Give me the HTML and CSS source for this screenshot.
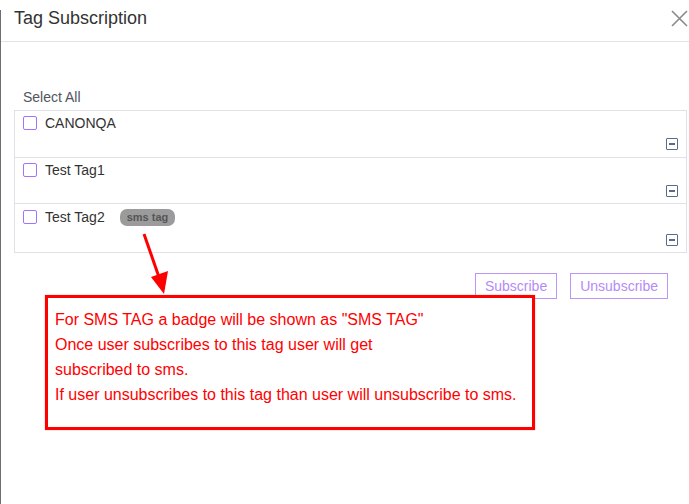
FILE: index.html
```html
<!DOCTYPE html>
<html>
<head>
<meta charset="utf-8">
<link rel="stylesheet" href="styles.css">
</head>
<body>
<div class="page">
  <div class="edge"></div>
  <div class="modal">
    <div class="modal-header">
      <h1 class="modal-title">Tag Subscription</h1>
      <button class="close" aria-label="Close">
        <svg width="17" height="17" viewBox="0 0 17 17"><path d="M1 1L16 16M16 1L1 16" stroke="#8a8a8a" stroke-width="1.6" fill="none"/></svg>
      </button>
    </div>
    <div class="modal-body">
      <div class="select-all">Select All</div>
      <ul class="tag-list">
        <li class="tag-row first">
          <div class="tag-top"><span class="check"></span><span class="tag-name">CANONQA</span></div>
          <div class="tag-bottom"><span class="collapse"></span></div>
        </li>
        <li class="tag-row">
          <div class="tag-top"><span class="check"></span><span class="tag-name">Test Tag1</span></div>
          <div class="tag-bottom"><span class="collapse"></span></div>
        </li>
        <li class="tag-row">
          <div class="tag-top tall"><span class="check"></span><span class="tag-name">Test Tag2</span><span class="badge">sms tag</span></div>
          <div class="tag-bottom"><span class="collapse"></span></div>
        </li>
      </ul>
      <div class="actions">
        <button class="btn">Subscribe</button>
        <button class="btn">Unsubscribe</button>
      </div>
    </div>
  </div>
  <svg class="arrow" width="40" height="70" viewBox="0 0 40 70">
    <line x1="4" y1="4" x2="20" y2="50" stroke="#ff0000" stroke-width="3"/>
    <polygon points="11,47 28,41 24,64" fill="#ff0000"/>
  </svg>
  <div class="note">
    <p>For SMS TAG a badge will be shown as "SMS TAG"</p>
    <p>Once user subscribes to this tag user will get</p>
    <p>subscribed to sms.</p>
    <p>If user unsubscribes to this tag than user will unsubscribe to sms.</p>
  </div>
</div>
</body>
</html>
```

FILE: styles.css
```css
html, body {
  margin: 0;
  padding: 0;
  background: #ffffff;
  overflow: hidden;
}
body {
  width: 689px;
  height: 504px;
  font-family: "Liberation Sans", Arial, sans-serif;
}
.page {
  position: relative;
  display: flex;
  height: 504px;
}
.edge {
  width: 1px;
  margin-top: 10px;
  background: #6e6e6e;
  flex: none;
}
.modal {
  width: 688px;
  flex: none;
}
.modal-header {
  height: 42px;
  border-bottom: 1px solid #e3e3e3;
  display: flex;
  align-items: center;
  justify-content: space-between;
  padding: 0 1px 0 13px;
  box-sizing: border-box;
}
.modal-title {
  margin: 0;
  font-family: "Liberation Sans Narrow", "Liberation Sans", Arial, sans-serif;
  font-weight: normal;
  font-size: 18px;
  color: #333333;
  position: relative;
  top: -2px;
}
.close {
  border: 0;
  background: none;
  padding: 0;
  width: 17px;
  height: 17px;
  display: flex;
  position: relative;
  top: -2px;
}
.modal-body {
  padding: 45px 2px 0 13px;
}
.select-all {
  font-size: 14px;
  line-height: 20px;
  color: #505560;
  margin: 0 0 3px 9px;
}
.tag-list {
  list-style: none;
  margin: 0;
  padding: 0;
  border: 1px solid #e0e0e6;
  border-top: 0;
}
.tag-row {
  border-top: 1px solid #e0e0e6;
  padding: 2px 8px 6px 8px;
}
.tag-row.first {
  padding-bottom: 7px;
}
.tag-top {
  display: flex;
  align-items: center;
  height: 20px;
}
.tag-top + .tag-bottom {
  margin-top: 5px;
}
.tag-top.tall {
  height: 24px;
  margin-top: -1px;
  margin-bottom: 3px;
}
.check {
  width: 12px;
  height: 12px;
  border: 1.5px solid #a374fa;
  border-radius: 2px;
  margin-right: 8px;
  flex: none;
}
.tag-name {
  font-size: 14px;
  color: #333333;
}
.badge {
  margin-left: 15px;
  background: #9b9b9b;
  color: #555555;
  font-size: 11px;
  font-weight: bold;
  border-radius: 7px;
  padding: 0 7px;
  height: 17px;
  line-height: 17px;
}
.tag-bottom {
  display: flex;
  justify-content: flex-end;
}
.collapse {
  position: relative;
  width: 10px;
  height: 10px;
  border: 1.5px solid #5c6a8a;
  border-radius: 1px;
}
.collapse::after {
  content: "";
  position: absolute;
  left: 2px;
  right: 2px;
  top: 4px;
  height: 1.5px;
  background: #5c6a8a;
}
.actions {
  display: flex;
  justify-content: flex-end;
  gap: 13px;
  margin-top: 20px;
  padding-right: 19px;
}
.btn {
  height: 26px;
  padding: 0 9px;
  border: 1px solid #b996f8;
  background: #ffffff;
  color: #b48bf6;
  font-family: "Liberation Sans", Arial, sans-serif;
  font-size: 14px;
  border-radius: 0;
}
.arrow {
  position: absolute;
  left: 140px;
  top: 230px;
}
.note {
  position: absolute;
  left: 45px;
  top: 295px;
  box-sizing: border-box;
  width: 490px;
  height: 135px;
  border: 3px solid #ff0000;
  box-shadow: 0 0 1px rgba(255, 0, 0, 0.5);
  padding: 9px 0 0 7px;
  background: #ffffff;
  font-size: 16px;
  line-height: 25px;
  color: #ff0000;
}
.note p {
  margin: 0;
}
```
